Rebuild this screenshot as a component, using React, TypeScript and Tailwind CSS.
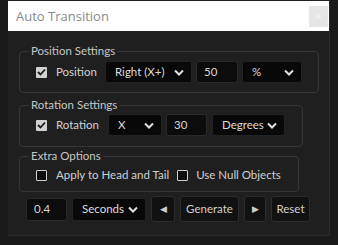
import React from "react";

const Chevron = () => (
  <svg width="10" height="7" viewBox="0 0 10 7" className="shrink-0">
    <polyline points="1,1.5 5,5.5 9,1.5" fill="none" stroke="#e0e0e0" strokeWidth="2" />
  </svg>
);

const Check = ({ checked }: { checked: boolean }) =>
  checked ? (
    <div className="w-[11px] h-[11px] bg-[#d2d2d2] rounded-[1px] flex items-center justify-center shrink-0">
      <svg width="9" height="8" viewBox="0 0 9 8">
        <polyline points="1,4 3.5,6.5 8,1.5" fill="none" stroke="#1a1a1a" strokeWidth="1.8" />
      </svg>
    </div>
  ) : (
    <div className="w-[11px] h-[11px] border-[1.5px] border-[#cfcfcf] bg-[#0e0e0e] rounded-[1px] shrink-0" />
  );

const Select = ({ label, w }: { label: string; w: string }) => (
  <div
    className={`${w} h-[22px] bg-[#080808] border border-[#222] rounded-[3px] flex items-center justify-between pl-[9px] pr-[7px] text-[#dcdcdc] whitespace-nowrap`}
  >
    <span>{label}</span>
    <Chevron />
  </div>
);

const Input = ({ value, w }: { value: string; w: string }) => (
  <div
    className={`${w} h-[22px] bg-[#0c0c0c] border border-[#2a2a2a] rounded-[3px] flex items-center pl-[7px] text-[#d6d6d6]`}
  >
    {value}
  </div>
);

const Btn = ({ children, w }: { children: React.ReactNode; w: string }) => (
  <div
    className={`${w} h-[26px] bg-[#111] border border-[#2c2c2c] rounded-[3px] flex items-center justify-center text-[#cfcfcf]`}
  >
    {children}
  </div>
);

export default function App() {
  return (
    <div className="w-[338px] h-[245px] bg-[#1a1a1a] font-['Lato',sans-serif] text-[11.5px] leading-[14px] overflow-hidden">
      <div className="ml-[8px] w-[322px] h-[236px] bg-[#1f1f1f] border-r border-b border-[#2b2b2b] flex flex-col">
        <div className="mt-[1px] h-[30px] bg-white flex items-center justify-between pl-[8px] pr-[1px]">
          <span className="text-[13px] text-[#8a8a8a] font-['Open_Sans',sans-serif]">Auto Transition</span>
          <div className="w-[19px] h-[21px] bg-[#e6e6e6] flex items-center justify-center text-[#f6f6f6] text-[12px]">
            ×
          </div>
        </div>
        <div className="pl-[11px] pt-[13px] flex flex-col items-start">
          <fieldset className="w-[300px] border border-[#363636] rounded-[4px] pl-[16px] pr-[16px] pt-[3px] pb-[9px]">
            <legend className="ml-[-7px] px-[2px] text-[#c6c6c6]">Position Settings</legend>
            <div className="flex items-center">
              <Check checked />
              <span className="ml-[9px] w-[49px] text-[#d0d0d0]">Position</span>
              <Select label="Right (X+)" w="w-[87px]" />
              <div className="w-[4px]" />
              <Input value="50" w="w-[42px]" />
              <div className="w-[4px]" />
              <Select label="%" w="w-[60px]" />
            </div>
          </fieldset>
          <fieldset className="mt-[5px] w-[284px] border border-[#363636] rounded-[4px] pl-[16px] pr-[16px] pt-[2px] pb-[10px]">
            <legend className="ml-[-7px] px-[2px] text-[#c6c6c6]">Rotation Settings</legend>
            <div className="flex items-center">
              <Check checked />
              <span className="ml-[9px] w-[52px] text-[#d0d0d0]">Rotation</span>
              <Select label="X" w="w-[54px]" />
              <div className="w-[4px]" />
              <Input value="30" w="w-[41px]" />
              <div className="w-[5px]" />
              <Select label="Degrees" w="w-[73px]" />
            </div>
          </fieldset>
          <fieldset className="mt-[2px] w-[280px] border border-[#363636] rounded-[4px] pl-[16px] pr-[8px] pt-[5px] pb-[9px]">
            <legend className="ml-[-7px] px-[2px] text-[#c6c6c6]">Extra Options</legend>
            <div className="flex items-center whitespace-nowrap">
              <Check checked={false} />
              <span className="ml-[9px] text-[#d0d0d0]">Apply to Head and Tail</span>
              <div className="ml-[8px]">
                <Check checked={false} />
              </div>
              <span className="ml-[8px] text-[#d0d0d0]">Use Null Objects</span>
            </div>
          </fieldset>
          <div className="mt-[4px] ml-[7px] flex items-center gap-[5px]">
            <Input value="0.4" w="w-[41px] h-[23px]" />
            <Select label="Seconds" w="w-[74px] h-[23px]" />
            <Btn w="w-[24px]">
              <span className="text-[9px]">◀</span>
            </Btn>
            <Btn w="w-[59px]">Generate</Btn>
            <Btn w="w-[22px]">
              <span className="text-[9px]">▶</span>
            </Btn>
            <Btn w="w-[39px]">Reset</Btn>
          </div>
        </div>
      </div>
    </div>
  );
}
